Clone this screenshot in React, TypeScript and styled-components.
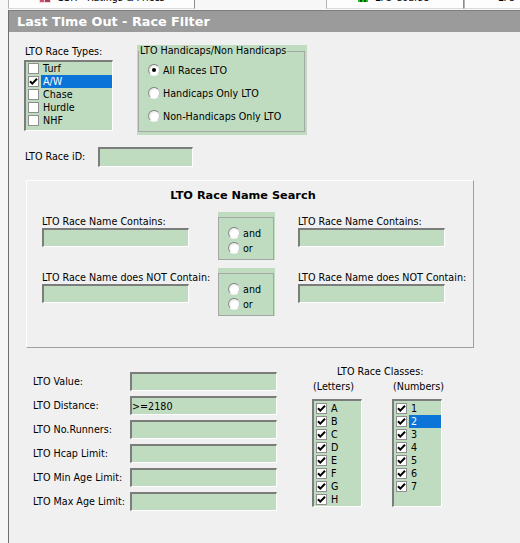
import React from 'react';
import styled, { createGlobalStyle } from 'styled-components';

const GREEN = '#c0dcc0';
const HILITE = '#0a74d8';

type TItem = {
  label: string;
  checked: boolean;
  selected?: boolean;
};

const raceTypes: TItem[] = [
  { label: 'Turf', checked: false },
  { label: 'A/W', checked: true, selected: true },
  { label: 'Chase', checked: false },
  { label: 'Hurdle', checked: false },
  { label: 'NHF', checked: false },
];

const letters: TItem[] = ['A', 'B', 'C', 'D', 'E', 'F', 'G', 'H'].map((l) => ({
  label: l,
  checked: true,
}));

const numbers: TItem[] = ['1', '2', '3', '4', '5', '6', '7'].map((n) => ({
  label: n,
  checked: true,
  selected: n === '2',
}));

const limits = [
  { label: 'LTO Value:', value: '' },
  { label: 'LTO Distance:', value: '>=2180' },
  { label: 'LTO No.Runners:', value: '' },
  { label: 'LTO Hcap Limit:', value: '' },
  { label: 'LTO Min Age Limit:', value: '' },
  { label: 'LTO Max Age Limit:', value: '' },
];

const Tick = () => (
  <svg width='9' height='9' viewBox='0 0 9 9'>
    <path d='M1 4.2 L3.3 6.6 L8 1.8' fill='none' stroke='#000' strokeWidth='2' />
  </svg>
);

const CheckList = ({ items, width, height, padTop }: { items: TItem[]; width: number; height: number; padTop: number }) => (
  <ListBox $w={width} $h={height} $padTop={padTop}>
    {items.map((item) => (
      <ListItem key={item.label}>
        <CheckBox>{item.checked && <Tick />}</CheckBox>
        <ItemText $selected={item.selected}>{item.label}</ItemText>
      </ListItem>
    ))}
  </ListBox>
);

const Radio = ({ label, on }: { label: string; on?: boolean }) => (
  <RadioRow>
    <RadioDot $on={on} />
    <span>{label}</span>
  </RadioRow>
);

const AndOr = () => (
  <GroupShell $w={57} $h={48} $pad='5px 1px 0 0'>
    <Group>
      <RadioStack $pad='8px 0 0 9px' $gap={1}>
        <Radio label='and' />
        <Radio label='or' />
      </RadioStack>
    </Group>
  </GroupShell>
);

const NameField = ({ label }: { label: string }) => (
  <NameCell>
    <FieldLabel>{label}</FieldLabel>
    <Field $w={147} $h={19} readOnly defaultValue='' />
  </NameCell>
);

export default function App() {
  return (
    <>
      <GlobalStyle />
      <TabStrip>
        <Tab $w={187} $pad={30}>
          <TabIcon width='12' height='12' viewBox='0 0 12 12'>
            <rect x='0' y='0' width='12' height='12' fill='#f2d6dc' />
            <rect x='1' y='8' width='4' height='3' fill='#d0506a' />
            <rect x='6' y='7' width='5' height='4' fill='#a04060' />
          </TabIcon>
          <TabLabel>SSH - Ratings &amp; Prices</TabLabel>
        </Tab>
        <TabGap />
        <Tab $w={138} $pad={31}>
          <TabIcon width='10' height='12' viewBox='0 0 10 12'>
            <rect x='0' y='6' width='10' height='5' fill='#21c021' />
            <rect x='2' y='9' width='2' height='2' fill='#0a5a0a' />
            <rect x='6' y='9' width='2' height='2' fill='#0a5a0a' />
          </TabIcon>
          <TabLabel>LTO Course</TabLabel>
        </Tab>
        <Tab $w={80} $pad={33}>
          <TabLabel>LTO Going</TabLabel>
        </Tab>
      </TabStrip>
      <Body>
        <Gutter />
        <Panel>
          <TitleBar>Last Time Out - Race Filter</TitleBar>
          <Content>
            <TopRow>
              <TypesColumn>
                <Caption>LTO Race Types:</Caption>
                <TypesList>
                  <CheckList items={raceTypes} width={89} height={71} padTop={0} />
                </TypesList>
              </TypesColumn>
              <HandicapShell>
                <GroupShell $w={170} $h={90} $pad='0 2px 3px 1px'>
                  <Group>
                    <Legend>LTO Handicaps/Non Handicaps</Legend>
                    <RadioStack $pad='6px 0 0 9px' $gap={9}>
                      <Radio label='All Races LTO' on />
                      <Radio label='Handicaps Only LTO' />
                      <Radio label='Non-Handicaps Only LTO' />
                    </RadioStack>
                  </Group>
                </GroupShell>
              </HandicapShell>
            </TopRow>

            <IdRow>
              <IdLabel>LTO Race iD:</IdLabel>
              <Field $w={95} $h={20} readOnly defaultValue='' />
            </IdRow>

            <SearchBox>
              <SearchTitle>LTO Race Name Search</SearchTitle>
              <SearchGrid>
                <NameField label='LTO Race Name Contains:' />
                <AndOr />
                <NameField label='LTO Race Name Contains:' />
                <NameField label='LTO Race Name does NOT Contain:' />
                <AndOr />
                <NameField label='LTO Race Name does NOT Contain:' />
              </SearchGrid>
            </SearchBox>

            <BottomRow>
              <LimitsGrid>
                {limits.map((l) => (
                  <React.Fragment key={l.label}>
                    <FieldLabel>{l.label}</FieldLabel>
                    <Field $w={147} $h={19} readOnly defaultValue={l.value} />
                  </React.Fragment>
                ))}
              </LimitsGrid>
              <Classes>
                <ClassesTitle>LTO Race Classes:</ClassesTitle>
                <ClassLists>
                  <ClassColumn>
                    <SubLabel>(Letters)</SubLabel>
                    <CheckList items={letters} width={50} height={108} padTop={1} />
                  </ClassColumn>
                  <ClassColumn>
                    <SubLabel>(Numbers)</SubLabel>
                    <CheckList items={numbers} width={50} height={108} padTop={1} />
                  </ClassColumn>
                </ClassLists>
              </Classes>
            </BottomRow>
          </Content>
        </Panel>
      </Body>
    </>
  );
}

const GlobalStyle = createGlobalStyle`
  html, body {
    margin: 0;
    padding: 0;
    height: 100%;
    overflow: hidden;
  }
  body {
    background: #f6f6f6;
    font-family: "DejaVu Sans", Verdana, sans-serif;
    font-size: 9.6px;
    color: #000;
  }
  * {
    box-sizing: border-box;
  }
`;

const TabStrip = styled.div`
  display: flex;
  height: 10px;
  overflow: hidden;
  padding-left: 8px;
  background: #f7f7f7;
`;

const Tab = styled.div<{ $w: number; $pad: number }>`
  flex: none;
  width: ${(p) => p.$w}px;
  height: 9px;
  display: flex;
  align-items: flex-start;
  gap: 7px;
  padding-left: ${(p) => p.$pad}px;
  background: #fdfdfd;
  border-left: 1px solid #b4b4b4;
  border-right: 1px solid #8c8c8c;
  border-bottom: 1px solid #dadada;
  white-space: nowrap;
`;

const TabGap = styled.div`
  flex: none;
  width: 131px;
`;

const TabIcon = styled.svg`
  flex: none;
  margin-top: -9px;
`;

const TabLabel = styled.span`
  line-height: 12px;
  margin-top: -8px;
`;

const Body = styled.div`
  display: flex;
  height: calc(100vh - 10px);
`;

const Gutter = styled.div`
  flex: none;
  width: 8px;
`;

const Panel = styled.div`
  flex: 1;
  background: #f0f0f0;
  border-left: 1px solid #6f6f6f;
`;

const TitleBar = styled.div`
  height: 22px;
  padding-left: 8px;
  background: #9b9b9b;
  border-top: 1px solid #7e7e7e;
  color: #fff;
  font-weight: bold;
  font-size: 12.8px;
  line-height: 21px;
  white-space: nowrap;
`;

const Content = styled.div`
  padding: 12px 0 0 16px;
`;

const TopRow = styled.div`
  display: flex;
  align-items: flex-start;
  gap: 24px;
`;

const TypesColumn = styled.div`
  width: 88px;
  padding-top: 2px;
  display: flex;
  flex-direction: column;
`;

const Caption = styled.div`
  line-height: 12px;
  white-space: nowrap;
`;

const TypesList = styled.div`
  margin: 2px 0 0 -1px;
`;

const ListBox = styled.div<{ $w: number; $h: number; $padTop: number }>`
  width: ${(p) => p.$w}px;
  height: ${(p) => p.$h}px;
  padding: ${(p) => p.$padTop}px 0 0 2px;
  display: flex;
  flex-direction: column;
  background: ${GREEN};
  border-style: solid;
  border-width: 2px 1px 1px 2px;
  border-color: #7c7c7c #fff #fff #7c7c7c;
`;

const ListItem = styled.div`
  display: flex;
  align-items: center;
  height: 13px;
  line-height: 13px;
`;

const CheckBox = styled.span`
  flex: none;
  width: 11px;
  height: 11px;
  display: inline-flex;
  align-items: center;
  justify-content: center;
  background: #fff;
  border: 1px solid #8e8e8e;
`;

const ItemText = styled.span<{ $selected?: boolean }>`
  flex: 1;
  height: 13px;
  margin-left: 2px;
  padding-left: 2px;
  background: ${(p) => (p.$selected ? HILITE : 'transparent')};
  color: ${(p) => (p.$selected ? '#fff' : '#000')};
  white-space: nowrap;
`;

const HandicapShell = styled.div`
  margin-top: 1px;
`;

const GroupShell = styled.div<{ $w: number; $h: number; $pad: string }>`
  width: ${(p) => p.$w}px;
  height: ${(p) => p.$h}px;
  padding: ${(p) => p.$pad};
  background: ${GREEN};
`;

const Group = styled.fieldset`
  height: 100%;
  min-width: 0;
  margin: 0;
  padding: 0;
  border: 1px solid #a6a6a6;
`;

const Legend = styled.legend`
  padding: 0 1px;
  margin-left: 0;
  line-height: 12px;
  white-space: nowrap;
`;

const RadioStack = styled.div<{ $pad: string; $gap: number }>`
  display: flex;
  flex-direction: column;
  gap: ${(p) => p.$gap}px;
  padding: ${(p) => p.$pad};
`;

const RadioRow = styled.div`
  display: flex;
  align-items: center;
  gap: 3px;
  height: 14px;
  white-space: nowrap;
`;

const RadioDot = styled.span<{ $on?: boolean }>`
  flex: none;
  width: 12px;
  height: 12px;
  border-radius: 50%;
  display: inline-flex;
  align-items: center;
  justify-content: center;
  background: radial-gradient(circle at 65% 65%, #fff 45%, #d4d4d4 100%);
  border: 1px solid;
  border-color: #7e7e7e #c8c8c8 #f6f6f6 #8e8e8e;

  &::after {
    content: '';
    display: ${(p) => (p.$on ? 'block' : 'none')};
    width: 4px;
    height: 4px;
    border-radius: 50%;
    background: #000;
  }
`;

const IdRow = styled.div`
  display: flex;
  align-items: center;
  margin-top: 12px;
`;

const IdLabel = styled.div`
  width: 73px;
  line-height: 12px;
`;

const Field = styled.input<{ $w: number; $h: number }>`
  width: ${(p) => p.$w}px;
  height: ${(p) => p.$h}px;
  padding: 0;
  margin: 0;
  font: inherit;
  color: #000;
  background: ${GREEN};
  border-style: solid;
  border-width: 2px 1px 1px 2px;
  border-color: #7c7c7c #fff #fff #7c7c7c;
  outline: none;
`;

const SearchBox = styled.div`
  width: 448px;
  height: 168px;
  margin: 13px 0 0 1px;
  padding: 8px 0 0 15px;
  border: 1px solid;
  border-color: #fff #a0a0a0 #a0a0a0 #fff;
`;

const SearchTitle = styled.div`
  width: 402px;
  text-align: center;
  font-weight: bold;
  font-size: 11.3px;
  line-height: 14px;
`;

const SearchGrid = styled.div`
  display: grid;
  grid-template-columns: 153px 57px 146px;
  column-gap: 23px;
  row-gap: 8px;
  margin-top: 9px;
`;

const NameCell = styled.div`
  display: flex;
  flex-direction: column;
  padding-top: 4px;
`;

const FieldLabel = styled.div`
  line-height: 12px;
  white-space: nowrap;
`;

const BottomRow = styled.div`
  display: flex;
  align-items: flex-start;
  margin-top: 18px;
`;

const LimitsGrid = styled.div`
  display: grid;
  grid-template-columns: 97px 147px;
  grid-auto-rows: 19px;
  row-gap: 5px;
  align-items: center;
  margin-left: 8px;
  padding-top: 6px;
`;

const Classes = styled.div`
  display: flex;
  flex-direction: column;
  margin-left: 35px;
`;

const ClassesTitle = styled.div`
  padding-left: 25px;
  line-height: 12px;
  white-space: nowrap;
`;

const ClassLists = styled.div`
  display: flex;
  gap: 30px;
  margin-top: 3px;
`;

const ClassColumn = styled.div`
  display: flex;
  flex-direction: column;
  gap: 6px;
`;

const SubLabel = styled.div`
  padding-left: 1px;
  line-height: 12px;
  white-space: nowrap;
`;
